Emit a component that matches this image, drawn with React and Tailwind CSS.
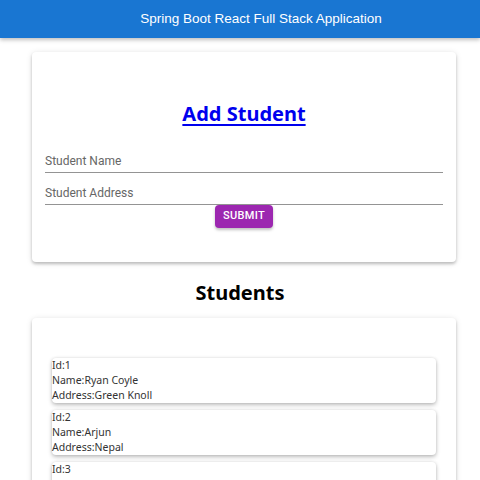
import React from 'react';

const students = [
  { id: 1, name: 'Ryan Coyle', address: 'Green Knoll' },
  { id: 2, name: 'Arjun', address: 'Nepal' },
  { id: 3, name: 'Sita', address: 'Kathmandu' },
];

function Field({ label }) {
  return (
    <div className="h-[27px] border-b border-[#949494] flex items-end pb-[3px]">
      <span className="text-[12px] leading-[16px] text-[#666] font-['Roboto',sans-serif]">{label}</span>
    </div>
  );
}

export default function App() {
  return (
    <div className="min-h-[480px] bg-white font-['Noto_Sans',sans-serif]">
      {/* App bar */}
      <header className="h-[38px] bg-[#1976d2] flex items-center justify-center pl-[42px] shadow-[0_2px_4px_rgba(0,0,0,0.25)] relative z-10">
        <span className="text-white text-[13.5px] font-['Liberation_Sans',Arial,sans-serif]">
          Spring Boot React Full Stack Application
        </span>
      </header>

      {/* Add student */}
      <div className="ml-[32px] mt-[14px] w-[424px] bg-white rounded-[4px] shadow-[0_2px_3px_rgba(0,0,0,0.2),0_1px_6px_rgba(0,0,0,0.12)] pt-[48px] pb-[34px]">
        <h1 className="text-center text-[20px] leading-[28px] font-bold">
          <a href="#" className="text-[#0000ee] underline underline-offset-[3px]">Add Student</a>
        </h1>
        <form className="px-[13px] mt-[18px] flex flex-col" onSubmit={(e) => e.preventDefault()}>
          <Field label="Student Name" />
          <div className="mt-[5px]">
            <Field label="Student Address" />
          </div>
          <button
            type="submit"
            className="mx-auto h-[23px] w-[58px] rounded-[4px] bg-[#9c27b0] text-white text-[11px] font-medium font-['Roboto',sans-serif] tracking-[0.3px] shadow-[0_2px_3px_rgba(0,0,0,0.25)]"
          >
            SUBMIT
          </button>
        </form>
      </div>

      <h1 className="mt-[17px] text-center text-[20px] leading-[28px] font-bold text-black">Students</h1>

      {/* Students list */}
      <div className="ml-[32px] mt-[11px] w-[424px] bg-white rounded-[4px] shadow-[0_2px_3px_rgba(0,0,0,0.2),0_1px_6px_rgba(0,0,0,0.12)] pt-[40px] px-[20px] pb-[20px] flex flex-col gap-[7px]">
        {students.map((s) => (
          <div
            key={s.id}
            className="h-[45px] rounded-[4px] bg-white shadow-[0_2px_4px_rgba(0,0,0,0.25),0_0_3px_rgba(0,0,0,0.1)] text-[10.5px] leading-[15px] text-[#333]"
          >
            <div>Id:{s.id}</div>
            <div>Name:{s.name}</div>
            <div>Address:{s.address}</div>
          </div>
        ))}
      </div>
    </div>
  );
}
